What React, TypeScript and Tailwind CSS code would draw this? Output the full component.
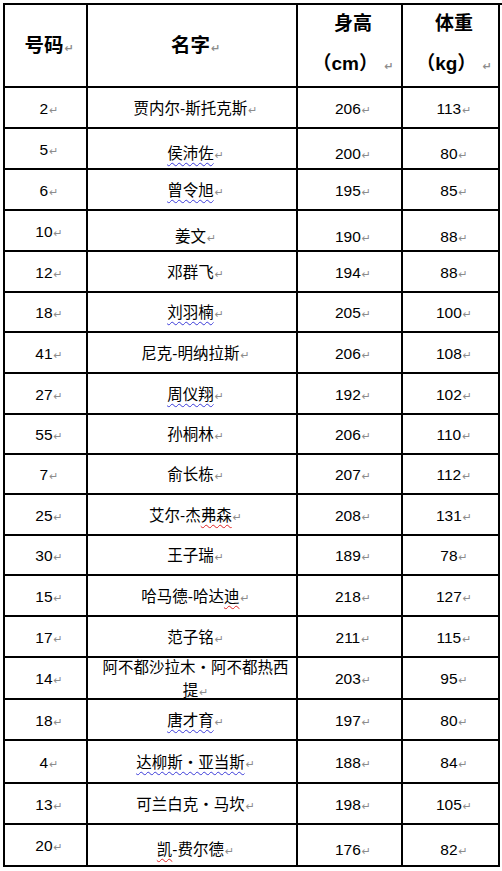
import type { ReactNode } from "react"

type Row = {
  no: string
  name: ReactNode
  h: string
  w: string
  height: string
  pad?: string
}

const font = { fontFamily: '"Liberation Sans", "Noto Sans CJK SC", sans-serif' }

function Mark() {
  return (
    <span className="ml-px text-[11px] text-[#8c8c8c]" style={{ fontFamily: '"DejaVu Sans", sans-serif' }}>
      ↵
    </span>
  )
}

function Blue({ children }: { children: ReactNode }) {
  return <span className="underline decoration-wavy decoration-[#3a3ad8] decoration-1 underline-offset-[3px]">{children}</span>
}

function Red({ children }: { children: ReactNode }) {
  return <span className="underline decoration-wavy decoration-[#e02424] decoration-1 underline-offset-[3px]">{children}</span>
}

const rows: Row[] = [
  { no: "2", name: "贾内尔-斯托克斯", h: "206", w: "113", height: "h-[41px]" },
  { no: "5", name: <Blue>侯沛佐</Blue>, h: "200", w: "80", height: "h-[41px]", pad: "pt-[12px]" },
  { no: "6", name: <Blue>曾令旭</Blue>, h: "195", w: "85", height: "h-[41px]" },
  { no: "10", name: "姜文", h: "190", w: "88", height: "h-[41px]", pad: "pt-[14px]" },
  { no: "12", name: "邓群飞", h: "194", w: "88", height: "h-[41px]" },
  { no: "18", name: <Blue>刘羽楠</Blue>, h: "205", w: "100", height: "h-[40px]" },
  { no: "41", name: "尼克-明纳拉斯", h: "206", w: "108", height: "h-[41px]" },
  { no: "27", name: <Blue>周仪翔</Blue>, h: "192", w: "102", height: "h-[41px]" },
  { no: "55", name: "孙桐林", h: "206", w: "110", height: "h-[40px]" },
  { no: "7", name: "俞长栋", h: "207", w: "112", height: "h-[40px]" },
  { no: "25", name: <>艾尔-杰<Red>弗森</Red></>, h: "208", w: "131", height: "h-[41px]" },
  { no: "30", name: "王子瑞", h: "189", w: "78", height: "h-[40px]" },
  { no: "15", name: <>哈马德-哈达<Red>迪</Red></>, h: "218", w: "127", height: "h-[41px]" },
  { no: "17", name: "范子铭", h: "211", w: "115", height: "h-[41px]" },
  { no: "14", name: <>阿不都沙拉木・阿不都热西<br />提</>, h: "203", w: "95", height: "h-[42px]" },
  { no: "18", name: <Blue>唐才育</Blue>, h: "197", w: "80", height: "h-[41px]" },
  { no: "4", name: <Blue>达柳斯・亚当斯</Blue>, h: "188", w: "84", height: "h-[43px]" },
  { no: "13", name: "可兰白克・马坎", h: "198", w: "105", height: "h-[41px]" },
  { no: "20", name: <><Red>凯</Red>-费尔德</>, h: "176", w: "82", height: "h-[42px]", pad: "pt-[10px]" },
]

const cell = "flex items-center justify-center border-r-2 border-b-2 border-black pl-[7px] text-center"

export default function App() {
  return (
    <div className="min-h-[871px] w-[502px] bg-white pl-[3px] pt-[3px] text-black" style={font}>
      <div className="grid w-[499px] grid-cols-[85px_210px_105px_97px] border-t-2 border-black">
        <div className={`${cell} h-[83px] border-l-2 text-[19.5px] font-bold`}>
          <span>号码<Mark /></span>
        </div>
        <div className={`${cell} h-[83px] text-[19.5px] font-bold`}>
          <span>名字<Mark /></span>
        </div>
        <div className={`${cell} h-[83px] text-[19px] font-bold leading-[40px]`}>
          <span>身高<br />（cm） <Mark /></span>
        </div>
        <div className={`${cell} h-[83px] text-[19px] font-bold leading-[40px]`}>
          <span>体重<br />（kg） <Mark /></span>
        </div>

        {rows.map((r, i) => (
          <div key={i} className="contents text-[15.5px] leading-[23px]">
            <div className={`${cell} ${r.height} border-l-2 pt-[3px]`}>
              <span>{r.no}<Mark /></span>
            </div>
            <div className={`${cell} ${r.height} ${r.pad ?? "pt-[3px]"}`}>
              <span>{r.name}<Mark /></span>
            </div>
            <div className={`${cell} ${r.height} ${r.pad ?? "pt-[3px]"}`}>
              <span>{r.h}<Mark /></span>
            </div>
            <div className={`${cell} ${r.height} ${r.pad ?? "pt-[3px]"}`}>
              <span>{r.w}<Mark /></span>
            </div>
          </div>
        ))}
      </div>
    </div>
  )
}
